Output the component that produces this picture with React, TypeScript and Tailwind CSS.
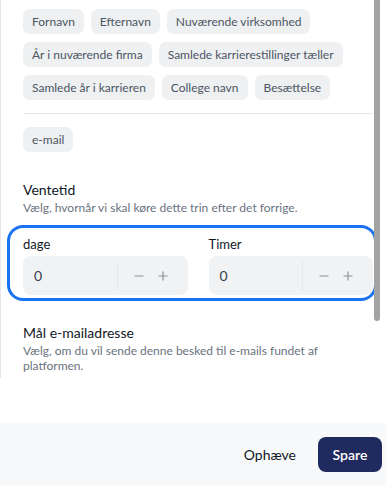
import { Minus, Plus } from "lucide-react";

const tagRows = [
  ["Fornavn", "Efternavn", "Nuværende virksomhed"],
  ["År i nuværende firma", "Samlede karrierestillinger tæller"],
  ["Samlede år i karrieren", "College navn", "Besættelse"],
];

function Tag({ label }: { label: string }) {
  return (
    <span className="h-[25px] px-[9px] flex items-center rounded-[7px] bg-[#eff0f2] text-[12px] text-[#4b5563] whitespace-nowrap">
      {label}
    </span>
  );
}

function Stepper({ label }: { label: string }) {
  return (
    <div className="flex flex-col">
      <label className="h-[18px] text-[13px] leading-[18px] text-[#111827]">{label}</label>
      <div className="mt-[3px] h-[39px] flex items-center rounded-[8px] bg-[#f1f2f4]">
        <span className="flex-1 pl-[11px] text-[14px] text-[#374151]">0</span>
        <div className="h-[30px] w-px bg-[#e6e7ea]" />
        <button className="ml-[14px] text-[#8c9098]">
          <Minus size={14} strokeWidth={2} />
        </button>
        <button className="ml-[10px] mr-[18px] text-[#8c9098]">
          <Plus size={14} strokeWidth={2} />
        </button>
      </div>
    </div>
  );
}

export default function App() {
  return (
    <div className="w-[386px] h-[486px] flex flex-col bg-white font-['Lato',sans-serif]">
      <div className="relative h-[423px]">
        <div className="h-[378px] overflow-hidden border-l border-[#e5e7eb] pl-[22px] pr-[13px] pt-[9px]">
          <div className="flex flex-col gap-[8px]">
            {tagRows.map((row, i) => (
              <div key={i} className="flex gap-[7px]">
                {row.map((t) => (
                  <Tag key={t} label={t} />
                ))}
              </div>
            ))}
          </div>

          <div className="mt-[13px] h-px bg-[#e5e7eb]" />

          <div className="mt-[13px] flex">
            <Tag label="e-mail" />
          </div>

          <h3 className="mt-[28px] text-[14px] leading-[20px] text-[#111827]">Ventetid</h3>
          <p className="text-[12px] leading-[16px] text-[#6b7280]">
            Vælg, hvornår vi skal køre dette trin efter det forrige.
          </p>

          <div className="relative mt-[9px] pt-[10px] pb-[6px]">
            <div className="grid grid-cols-2 gap-[21px]">
              <Stepper label="dage" />
              <Stepper label="Timer" />
            </div>
            <div className="absolute left-[-16px] right-[-4px] top-0 bottom-0 rounded-[16px] border-[3px] border-[#1a73f0] pointer-events-none" />
          </div>

          <h3 className="mt-[22px] text-[14px] leading-[20px] text-[#111827]">Mål e-mailadresse</h3>
          <p className="text-[12px] leading-[15px] text-[#6b7280]">
            Vælg, om du vil sende denne besked til e-mails fundet af platformen.
          </p>
        </div>
        <div className="absolute right-[6px] top-0 w-[6px] h-[321px] rounded-b-full bg-[#a3a3a3]" />
      </div>

      <div className="flex-1 bg-[#f8f9fb] flex items-center justify-end gap-[22px] pr-[4px]">
        <button className="text-[14px] text-[#111827]">Ophæve</button>
        <button className="h-[35px] w-[64px] rounded-[8px] bg-[#1f2a5e] text-[14px] font-semibold text-white">
          Spare
        </button>
      </div>
    </div>
  );
}
